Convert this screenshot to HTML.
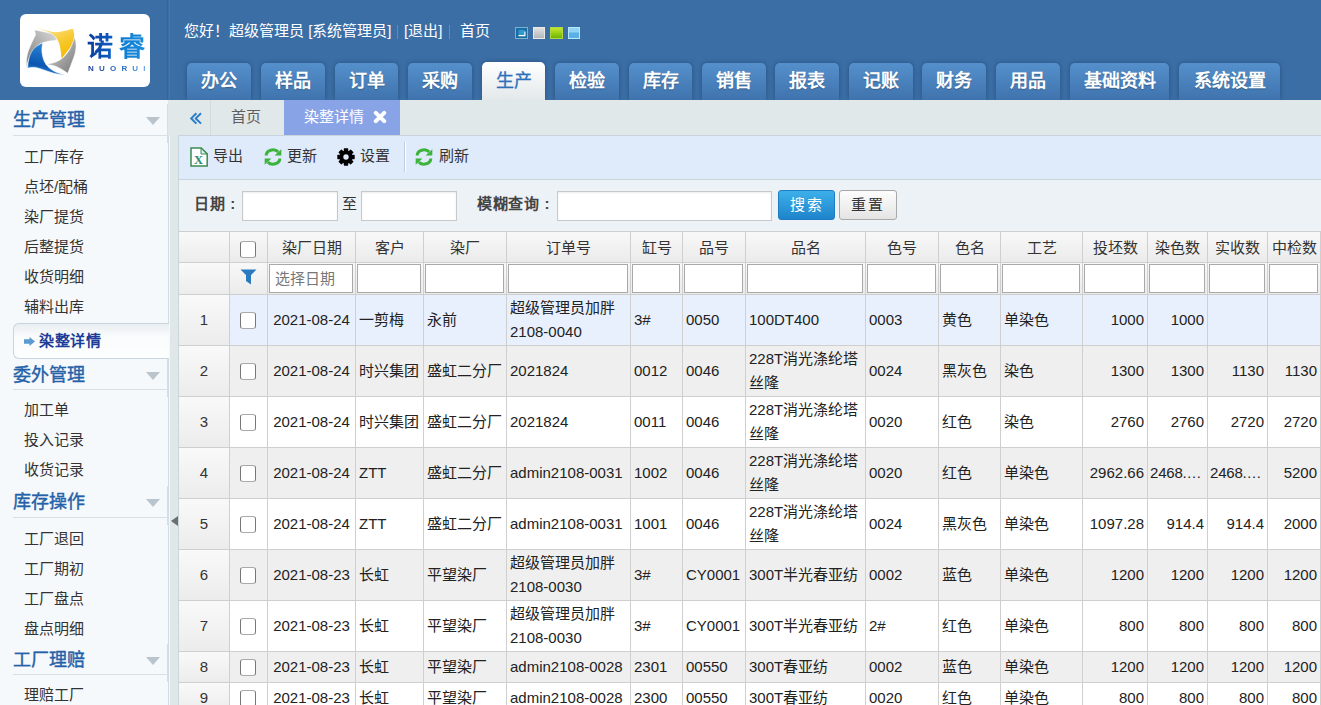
<!DOCTYPE html>
<html lang="zh-CN">
<head>
<meta charset="utf-8">
<style>
*{box-sizing:border-box;margin:0;padding:0}
html,body{width:1321px;height:705px;overflow:hidden}
body{font-family:"Liberation Sans",sans-serif;font-size:15px;color:#222;background:#e1e8ea;position:relative}
.abs{position:absolute}
#hdr{left:0;top:0;width:1321px;height:100px;background:#3b6ea5}
#hdrline{left:167px;top:0;width:1px;height:100px;background:#35649a;box-shadow:2px 0 0 #4678b0}
#logo{left:20px;top:14px;width:130px;height:73px;background:#fff;border-radius:6px}
#user{left:184px;top:21px;height:20px;line-height:20px;color:#fff;font-size:15px;white-space:nowrap}
#user .sep{color:#5a8cc0;margin:0 6px}
.sq{position:absolute;top:27px;width:13px;height:12px}
.tab{position:absolute;top:63px;height:37px;border-radius:5px 5px 0 0;background:linear-gradient(#5590cc,#3f73ad);box-shadow:0 0 4px rgba(25,55,95,.55);color:#fff;font-weight:bold;font-size:18px;line-height:37px;text-align:center;text-shadow:0 1px 1px rgba(0,0,0,.25)}
.tab.on{background:linear-gradient(#ffffff,#e3e8ea);color:#2c70bb;text-shadow:none;top:62px;height:38px;font-weight:normal;line-height:39px;-webkit-text-stroke:0.3px #2c70bb}
#side{left:0;top:100px;width:168px;height:605px;background:#f6f9fb}
#split{left:168px;top:100px;width:11px;height:605px;background:#e0e7e9;border-left:1px solid #d3dfe7;border-right:1px solid #c8d6de;box-shadow:inset 1px 0 0 #f4f8f9}
.sh{position:absolute;left:13px;width:155px;height:24px;line-height:24px;font-size:18px;color:#2461a8;font-weight:normal;-webkit-text-stroke:0.4px #2461a8}
.sh i{position:absolute;right:8px;top:9px;width:0;height:0;border-left:7px solid transparent;border-right:7px solid transparent;border-top:8px solid #b9c4cc}
.sl{position:absolute;left:13px;width:155px;height:1px;background:#d6e0e6}
.si{position:absolute;left:24px;height:20px;line-height:20px;color:#333;font-size:15px;white-space:nowrap}
.t15{position:absolute;height:20px;line-height:20px;color:#333;font-size:15px;white-space:nowrap}
.colon{margin-left:5px}
.btn{top:190px;height:30px;border-radius:3px;text-align:center;line-height:28px;letter-spacing:2px;font-size:15px}
#act{left:13px;top:323px;width:156px;height:36px;background:linear-gradient(#e9eef0,#f9fbfc 35%,#fdfefe);border:1px solid #c8d5de;border-right:none;border-radius:6px 0 0 6px}
#tabs2{left:168px;top:100px;width:1153px;height:35px;background:#e1e8ea}
#toolbar{left:178px;top:135px;width:1143px;height:45px;background:#dfeafa;border-top:1px solid #c9d3dc;border-bottom:1px solid #c9d3dc;border-left:1px solid #c8d6de}
#search{left:178px;top:180px;width:1143px;height:51px;background:#edf2f6;border-left:1px solid #c8d6de}
.inp{position:absolute;top:191px;height:30px;background:#fff;border:1px solid #c8c8c8;box-shadow:inset 0 1px 2px rgba(0,0,0,.08)}
.lbl{position:absolute;top:194px;height:20px;line-height:20px;font-weight:bold;color:#444;font-size:15px;letter-spacing:0.6px}
#grid{position:absolute;left:178px;top:231px;border-collapse:separate;border-spacing:0;table-layout:fixed;width:1143px;border-top:1px solid #cfcfcf;border-left:1px solid #c8d6de}
#grid td{border-right:1px solid #cfcfcf;border-bottom:1px solid #cfcfcf;padding:0 3px;white-space:nowrap;overflow:hidden;line-height:24px;vertical-align:middle}
#grid tr.hd td{height:31px;background:linear-gradient(#f8f8f8,#ebebeb);text-align:center;color:#333;padding-top:1px}
#grid tr.ft td{height:32px;background:linear-gradient(#f8f8f8,#ebebeb);padding:0 2px}
#grid td.rn{text-align:center;background:linear-gradient(90deg,#f6f6f6,#ececec);color:#333}
#grid td.c{text-align:center;padding:0}
#grid tr.sel td{background:#e8f0fd}
#grid tr.alt td{background:#efefef}
#grid tr.wh td{background:#fff}
#grid tr td.rn{background:linear-gradient(#f9f9f9,#ececec)}
#grid td.num{text-align:right;padding-right:3px}
.cb{display:inline-block;width:16px;height:17px;border:1px solid #777;border-top-color:#aaa;border-bottom-color:#aaa;border-radius:3px;background:#fff;vertical-align:middle;position:relative;left:-1px;top:-1px}
#grid td.dt{text-align:center;padding:0}
#grid tr.hd .cb{top:1px}
#grid tr.ft svg{position:relative;top:-3px}
.fi{height:29px;border:1px solid #a9a9a9;background:#fff;line-height:27px;padding-left:5px;color:#777;margin-left:-1px;margin-top:-1px}
</style>
</head>
<body>
<div id="hdr" class="abs"></div>
<div id="hdrline" class="abs"></div>
<div id="logo" class="abs">
 <svg class="abs" style="left:2px;top:10px" width="60" height="56" viewBox="0 0 60 56">
  <defs>
   <linearGradient id="gy" x1="0" y1="0" x2="0.6" y2="1"><stop offset="0" stop-color="#fde9a8"/><stop offset=".55" stop-color="#f8cc3a"/><stop offset="1" stop-color="#f3bb00"/></linearGradient>
   <linearGradient id="gg1" x1="1" y1="0" x2="0" y2="1"><stop offset="0" stop-color="#dcdcdc"/><stop offset="1" stop-color="#7c7c7c"/></linearGradient>
   <linearGradient id="gg2" x1="0" y1="0" x2="1" y2="1"><stop offset="0" stop-color="#e0e0e0"/><stop offset="1" stop-color="#767676"/></linearGradient>
   <linearGradient id="gb" x1="0.5" y1="0" x2="0.3" y2="1"><stop offset="0" stop-color="#2c86d8"/><stop offset=".7" stop-color="#0b56b0"/><stop offset="1" stop-color="#3a8ee0"/></linearGradient>
  </defs>
  <path d="M12 4 C20 4 28 9 36.6 8 C42 7 47 6 50.9 4.8 C52.5 9 52.5 13 51.7 15.9 C50 21 48 24 46.1 26.2 C43 30 41 33 39.7 35 C39 29 38.5 24 37.4 19.9 C36 16 34 13 31.8 11.9 C27 8 22 5.5 12 4 Z" fill="url(#gy)"/>
  <path d="M12.3 6 C18 7 24 8 29.4 9.5 C32 11 34 13 35 15.9 C33 16.2 31 16.5 30.2 16.7 C26 17 22.5 18 19.9 19.1 C16 21 14 23.5 11.9 26.2 C9.5 29.5 7.5 32.5 6.4 35.8 C5.5 38.5 5 41 4.8 43.3 C4.3 40 4.4 36.5 4.8 33.4 C5.5 29.5 6.5 26 7.9 23 C9.5 19 11.5 15 13.5 11.1 C13.5 9 13 7.5 12.3 6 Z" fill="url(#gg1)" stroke="#fff" stroke-width="0.5"/>
  <path d="M20.7 19.1 C20 22 19.7 25 19.9 27.8 C20.3 31 21 34.5 22.3 37.4 C24 41 27 44 30.2 46.1 C34 48.5 38.5 50 42.9 50.9 C39 50.8 35 50.2 31.8 49.3 C27.5 48 23.5 46.5 19.9 45.3 C17 44.2 14.5 43.4 11.9 43.3 C9.5 43.3 7.5 43.6 5.6 44.1 C5.8 40.5 6.3 37 7.2 33.4 C8.3 30 10 27 11.9 24.6 C14.5 22 17.5 20.2 20.7 19.1 Z" fill="url(#gb)" stroke="#fff" stroke-width="0.5"/>
  <path d="M52.5 13.5 C53.8 16.5 54.2 20 54 23.8 C53.6 28 52.5 32 50.9 35.8 C49.3 40 47.5 45 45.7 49.3 C43.3 47.5 40.8 45.8 38.2 44.5 C35.5 43 32.8 41.8 30.2 41.3 C28 40.9 25.8 40.6 23.8 40.5 C27 40 30.3 39.3 33.4 38.2 C36.3 37 38.9 35.3 41.3 33.4 C43.8 31 45.9 28.3 47.7 25.4 C49.8 21.5 51.3 17.5 52.5 13.5 Z" fill="url(#gg2)" stroke="#fff" stroke-width="0.5"/>
 </svg>
 <div class="abs" style="left:67px;top:17px;height:32px;font-size:26px;line-height:32px;font-weight:900;white-space:nowrap;letter-spacing:6px;background:linear-gradient(90deg,#0a3a9c,#0d5fc0 40%,#0f7dd2 55%,#1b8fde);-webkit-background-clip:text;background-clip:text;color:transparent">诺睿</div>
 <div class="abs" style="left:68px;top:51px;font-size:8px;line-height:8px;font-weight:bold;letter-spacing:5.2px;white-space:nowrap;background:linear-gradient(90deg,#1a3f9a,#2a70c0 60%,#6ab8ee);-webkit-background-clip:text;background-clip:text;color:transparent">NUORUI</div>
</div>
<div id="user" class="abs">您好！超级管理员 [系统管理员]</div>
<div class="abs" style="left:397px;top:25px;width:1px;height:14px;background:#5b8cc2"></div>
<div id="user2" class="abs" style="left:404px;top:21px;height:20px;line-height:20px;color:#fff;font-size:15px;white-space:nowrap">[退出]</div>
<div class="abs" style="left:449px;top:25px;width:1px;height:14px;background:#5b8cc2"></div>
<div class="abs" style="left:460px;top:21px;height:20px;line-height:20px;color:#fff;font-size:15px;white-space:nowrap">首页</div>
<svg class="abs" style="left:515px;top:27px" width="13" height="12" viewBox="0 0 13 12"><rect width="13" height="12" fill="#79b3d2"/><rect x="1" y="1" width="11" height="10" fill="#1b6c9f"/><rect x="3.5" y="2.8" width="6" height="5.4" fill="#2e98cf"/><path d="M3.5 8.1h7v1.2h-7z M9.3 4.5h1.2v4.8h-1.2z" fill="#fff"/></svg>
<div class="sq" style="left:533px;width:12px;background:linear-gradient(#dfe1e3,#b4b7ba);border:1px solid #ece8e4"></div>
<div class="sq" style="left:550px;background:linear-gradient(#c4e830,#70b400);border:1px solid #b0d840"></div>
<div class="sq" style="left:568px;width:12px;background:linear-gradient(#90d4f4 0,#90d4f4 40%,#5ab0e6 50%,#5ab0e6);border:1px solid #b8e8fc"></div>
<div class="tab" style="left:187px;width:64px">办公</div>
<div class="tab" style="left:261px;width:64px">样品</div>
<div class="tab" style="left:335px;width:63px">订单</div>
<div class="tab" style="left:408px;width:64px">采购</div>
<div class="tab on" style="left:482px;width:63px">生产</div>
<div class="tab" style="left:555px;width:64px">检验</div>
<div class="tab" style="left:629px;width:63px">库存</div>
<div class="tab" style="left:702px;width:64px">销售</div>
<div class="tab" style="left:775px;width:64px">报表</div>
<div class="tab" style="left:849px;width:64px">记账</div>
<div class="tab" style="left:922px;width:64px">财务</div>
<div class="tab" style="left:996px;width:64px">用品</div>
<div class="tab" style="left:1070px;width:99px">基础资料</div>
<div class="tab" style="left:1179px;width:101px">系统设置</div>
<div id="side" class="abs"></div>
<div id="split" class="abs"></div>
<div class="abs" style="left:171px;top:516px;width:0;height:0;border-top:5.5px solid transparent;border-bottom:5.5px solid transparent;border-right:7px solid #6a6f72"></div>
<div class="abs" style="left:167px;top:104px;width:1px;height:39px;background:#d3dfe7"></div>
<div class="sh" style="top:108px">生产管理<i></i></div>
<div class="sl" style="top:135px"></div>
<div class="si" style="top:147px">工厂库存</div>
<div class="si" style="top:177px">点坯/配桶</div>
<div class="si" style="top:207px">染厂提货</div>
<div class="si" style="top:237px">后整提货</div>
<div class="si" style="top:267px">收货明细</div>
<div class="si" style="top:297px">辅料出库</div>
<div id="act" class="abs"></div>
<svg class="abs" style="left:24px;top:337px" width="11" height="9" viewBox="0 0 11 9"><path d="M0 2.3h5.5v-2.3l5.5 4.5-5.5 4.5v-2.3h-5.5z" fill="#5b9bd2"/></svg>
<div class="si" style="left:39px;top:331px;font-weight:bold;color:#1b3c98;letter-spacing:0.7px">染整详情</div>
<div class="abs" style="left:167px;top:359px;width:1px;height:38px;background:#d3dfe7"></div>
<div class="sh" style="top:363px">委外管理<i></i></div>
<div class="sl" style="top:389px"></div>
<div class="si" style="top:400px">加工单</div>
<div class="si" style="top:430px">投入记录</div>
<div class="si" style="top:460px">收货记录</div>
<div class="abs" style="left:167px;top:486px;width:1px;height:39px;background:#d3dfe7"></div>
<div class="sh" style="top:490px">库存操作<i></i></div>
<div class="sl" style="top:517px"></div>
<div class="si" style="top:529px">工厂退回</div>
<div class="si" style="top:559px">工厂期初</div>
<div class="si" style="top:589px">工厂盘点</div>
<div class="si" style="top:619px">盘点明细</div>
<div class="abs" style="left:167px;top:644px;width:1px;height:38px;background:#d3dfe7"></div>
<div class="sh" style="top:648px">工厂理赔<i></i></div>
<div class="sl" style="top:674px"></div>
<div class="si" style="top:685px">理赔工厂</div>
<div id="tabs2" class="abs"></div>
<div class="abs" style="left:210px;top:100px;width:1px;height:35px;background:#d2dadd"></div>
<svg class="abs" style="left:188px;top:111px" width="16" height="15" viewBox="0 0 16 15"><path d="M8.4 2.2L3.2 7.4L8.4 12.6M13 2.2L7.8 7.4L13 12.6" fill="none" stroke="#2a7bc8" stroke-width="2"/></svg>
<div class="t15" style="left:231px;top:107px;color:#606060">首页</div>
<div class="abs" style="left:284px;top:100px;width:116px;height:35px;background:#88a4e7"></div>
<div class="t15" style="left:304px;top:107px;color:#fff">染整详情</div>
<svg class="abs" style="left:373px;top:110px" width="14" height="14" viewBox="0 0 14 14"><path d="M2.8 2.8L11.2 11.2M11.2 2.8L2.8 11.2" stroke="#fff" stroke-width="4" stroke-linecap="round"/></svg>
<div id="toolbar" class="abs"></div>
<svg class="abs" style="left:190px;top:147px" width="18" height="20" viewBox="0 0 18 20"><path d="M1 1h10l6 6v12H1z" fill="#fff"/><path d="M11 1v6h6z" fill="#e6f0f8"/><path d="M1 0.9h10.2l6 6V19H1z" fill="none" stroke="#3d8a50" stroke-width="1.5"/><path d="M11 1v6h6" fill="none" stroke="#3d8a50" stroke-width="1"/><text x="4" y="17.2" font-family="Liberation Serif" font-weight="bold" font-size="12.5" fill="#2a8a70">X</text></svg>
<div class="t15" style="left:213px;top:146px">导出</div>
<svg class="abs" style="left:264px;top:147.5px" width="18" height="18" viewBox="0 0 18 18"><g fill="none" stroke="#3cb43c" stroke-width="3"><path d="M2.2 7.5A6.8 5.6 0 0 1 14.2 3.9"/><path d="M15.8 10.5A6.8 5.6 0 0 1 3.8 14.1"/></g><g fill="#3cb43c"><path d="M17.3 1.3V7.5H10.6z"/><path d="M0.7 16.7V10.5H7.4z"/></g></svg>
<div class="t15" style="left:287px;top:146px">更新</div>
<svg class="abs" style="left:336.5px;top:147.5px" width="18" height="18" viewBox="0 0 18 18"><g fill="#000"><circle cx="9" cy="9" r="6.6"/><rect x="6.8" y="0.3" width="4.4" height="17.4" rx="0.6"/><rect x="6.8" y="0.3" width="4.4" height="17.4" rx="0.6" transform="rotate(45 9 9)"/><rect x="6.8" y="0.3" width="4.4" height="17.4" rx="0.6" transform="rotate(90 9 9)"/><rect x="6.8" y="0.3" width="4.4" height="17.4" rx="0.6" transform="rotate(135 9 9)"/></g><circle cx="9" cy="9" r="2.7" fill="#dfeafa"/></svg>
<div class="t15" style="left:360px;top:146px">设置</div>
<div class="abs" style="left:404px;top:142px;width:1px;height:30px;background:#c3ccd4;border-right:1px solid #fff;box-sizing:content-box"></div>
<svg class="abs" style="left:415px;top:147.5px" width="18" height="18" viewBox="0 0 18 18"><g fill="none" stroke="#3cb43c" stroke-width="3"><path d="M2.2 7.5A6.8 5.6 0 0 1 14.2 3.9"/><path d="M15.8 10.5A6.8 5.6 0 0 1 3.8 14.1"/></g><g fill="#3cb43c"><path d="M17.3 1.3V7.5H10.6z"/><path d="M0.7 16.7V10.5H7.4z"/></g></svg>
<div class="t15" style="left:439px;top:146px">刷新</div>
<div id="search" class="abs"></div>
<div class="lbl" style="left:194px">日期<span class="colon">:</span></div>
<div class="inp" style="left:242px;width:96px"></div>
<div class="t15" style="left:342px;top:194px">至</div>
<div class="inp" style="left:361px;width:96px"></div>
<div class="lbl" style="left:477px">模糊查询<span class="colon">:</span></div>
<div class="inp" style="left:557px;width:215px"></div>
<div class="abs btn" style="left:778px;width:57px;border:1px solid #1f7cc0;background:linear-gradient(#3cb0ea,#1e84cb);color:#fff">搜索</div>
<div class="abs btn" style="left:839px;width:58px;border:1px solid #a8a8a8;background:linear-gradient(#fdfdfd,#e4e4e4);color:#333">重置</div>
<table id="grid"><colgroup><col style="width:51px"><col style="width:38px"><col style="width:88px"><col style="width:68px"><col style="width:83px"><col style="width:124px"><col style="width:52px"><col style="width:63px"><col style="width:120px"><col style="width:73px"><col style="width:62px"><col style="width:82px"><col style="width:65px"><col style="width:60px"><col style="width:60px"><col style="width:53px"></colgroup>
<tr class="hd"><td class="rn"></td><td class="c"><span class="cb"></span></td><td>染厂日期</td><td>客户</td><td>染厂</td><td>订单号</td><td>缸号</td><td>品号</td><td>品名</td><td>色号</td><td>色名</td><td>工艺</td><td>投坯数</td><td>染色数</td><td>实收数</td><td>中检数</td></tr>
<tr class="ft"><td class="rn"></td><td class="c"><svg width="17" height="17" viewBox="0 0 17 17" style="vertical-align:middle"><path d="M0.5 1.5h16l-5.5 5.5v9.5l-5-3.5v-6z" fill="#2a7ac0"/></svg></td><td><div class="fi ph">选择日期</div></td><td><div class="fi"></div></td><td><div class="fi"></div></td><td><div class="fi"></div></td><td><div class="fi"></div></td><td><div class="fi"></div></td><td><div class="fi"></div></td><td><div class="fi"></div></td><td><div class="fi"></div></td><td><div class="fi"></div></td><td><div class="fi"></div></td><td><div class="fi"></div></td><td><div class="fi"></div></td><td><div class="fi"></div></td></tr>
<tr class="sel" style="height:51px"><td class="rn">1</td><td class="c"><span class="cb"></span></td><td class="dt">2021-08-24</td><td>一剪梅</td><td>永前</td><td class="ml">超级管理员加胖<br>2108-0040</td><td>3#</td><td>0050</td><td>100DT400</td><td>0003</td><td>黄色</td><td>单染色</td><td class="num">1000</td><td class="num">1000</td><td class="num"></td><td class="num"></td></tr>
<tr class="alt" style="height:51px"><td class="rn">2</td><td class="c"><span class="cb"></span></td><td class="dt">2021-08-24</td><td>时兴集团</td><td>盛虹二分厂</td><td>2021824</td><td>0012</td><td>0046</td><td class="ml">228T消光涤纶塔<br>丝隆</td><td>0024</td><td>黑灰色</td><td>染色</td><td class="num">1300</td><td class="num">1300</td><td class="num">1130</td><td class="num">1130</td></tr>
<tr class="wh" style="height:51px"><td class="rn">3</td><td class="c"><span class="cb"></span></td><td class="dt">2021-08-24</td><td>时兴集团</td><td>盛虹二分厂</td><td>2021824</td><td>0011</td><td>0046</td><td class="ml">228T消光涤纶塔<br>丝隆</td><td>0020</td><td>红色</td><td>染色</td><td class="num">2760</td><td class="num">2760</td><td class="num">2720</td><td class="num">2720</td></tr>
<tr class="alt" style="height:51px"><td class="rn">4</td><td class="c"><span class="cb"></span></td><td class="dt">2021-08-24</td><td>ZTT</td><td>盛虹二分厂</td><td>admin2108-0031</td><td>1002</td><td>0046</td><td class="ml">228T消光涤纶塔<br>丝隆</td><td>0020</td><td>红色</td><td>单染色</td><td class="num">2962.66</td><td style="padding-left:2px;letter-spacing:-0.2px">2468.…</td><td style="padding-left:2px;letter-spacing:-0.2px">2468.…</td><td class="num">5200</td></tr>
<tr class="wh" style="height:51px"><td class="rn">5</td><td class="c"><span class="cb"></span></td><td class="dt">2021-08-24</td><td>ZTT</td><td>盛虹二分厂</td><td>admin2108-0031</td><td>1001</td><td>0046</td><td class="ml">228T消光涤纶塔<br>丝隆</td><td>0024</td><td>黑灰色</td><td>单染色</td><td class="num">1097.28</td><td class="num">914.4</td><td class="num">914.4</td><td class="num">2000</td></tr>
<tr class="alt" style="height:51px"><td class="rn">6</td><td class="c"><span class="cb"></span></td><td class="dt">2021-08-23</td><td>长虹</td><td>平望染厂</td><td class="ml">超级管理员加胖<br>2108-0030</td><td>3#</td><td>CY0001</td><td>300T半光春亚纺</td><td>0002</td><td>蓝色</td><td>单染色</td><td class="num">1200</td><td class="num">1200</td><td class="num">1200</td><td class="num">1200</td></tr>
<tr class="wh" style="height:51px"><td class="rn">7</td><td class="c"><span class="cb"></span></td><td class="dt">2021-08-23</td><td>长虹</td><td>平望染厂</td><td class="ml">超级管理员加胖<br>2108-0030</td><td>3#</td><td>CY0001</td><td>300T半光春亚纺</td><td>2#</td><td>红色</td><td>单染色</td><td class="num">800</td><td class="num">800</td><td class="num">800</td><td class="num">800</td></tr>
<tr class="alt" style="height:31px"><td class="rn">8</td><td class="c"><span class="cb"></span></td><td class="dt">2021-08-23</td><td>长虹</td><td>平望染厂</td><td>admin2108-0028</td><td>2301</td><td>00550</td><td>300T春亚纺</td><td>0002</td><td>蓝色</td><td>单染色</td><td class="num">1200</td><td class="num">1200</td><td class="num">1200</td><td class="num">1200</td></tr>
<tr class="wh" style="height:31px"><td class="rn">9</td><td class="c"><span class="cb"></span></td><td class="dt">2021-08-23</td><td>长虹</td><td>平望染厂</td><td>admin2108-0028</td><td>2300</td><td>00550</td><td>300T春亚纺</td><td>0020</td><td>红色</td><td>单染色</td><td class="num">800</td><td class="num">800</td><td class="num">800</td><td class="num">800</td></tr></table>
</body>
</html>
